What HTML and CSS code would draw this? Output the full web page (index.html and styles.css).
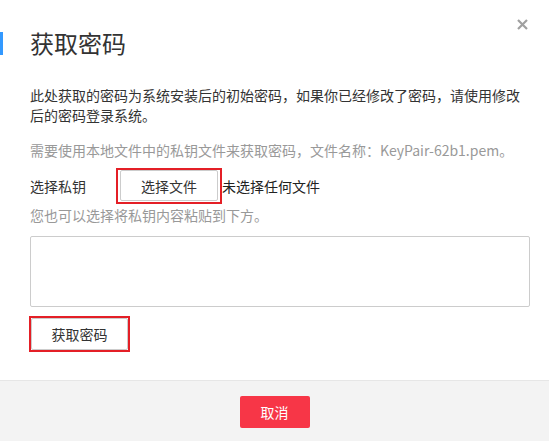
FILE: index.html
```html
<!DOCTYPE html>
<html lang="zh-CN">
<head>
<meta charset="utf-8">
<title>获取密码</title>
<link rel="stylesheet" href="styles.css">
</head>
<body>
<div class="dialog">
  <div class="header">
    <span class="bar"></span>
    <h1 class="title">获取密码</h1>
  </div>
  <span class="close" aria-label="关闭">
    <svg width="11" height="11" viewBox="0 0 11 11"><path d="M1 1L10 10M10 1L1 10" stroke="#a0a0a0" stroke-width="2.2" fill="none"/></svg>
  </span>
  <div class="content">
    <p class="desc">此处获取的密码为系统安装后的初始密码，如果你已经修改了密码，请使用修改后的密码登录系统。</p>
    <p class="hint">需要使用本地文件中的私钥文件来获取密码，文件名称：KeyPair-62b1.pem。</p>
    <div class="file-row">
      <span class="label">选择私钥</span>
      <span class="mark mark-file"><span class="btn btn-file">选择文件</span></span>
      <span class="no-file">未选择任何文件</span>
    </div>
    <p class="hint hint-paste">您也可以选择将私钥内容粘贴到下方。</p>
    <textarea class="key-input"></textarea>
    <span class="mark mark-get"><span class="btn btn-get">获取密码</span></span>
  </div>
  <div class="footer">
    <span class="btn-cancel">取消</span>
  </div>
</div>
</body>
</html>
```
FILE: styles.css
```css
* { box-sizing: border-box; }
html, body { margin: 0; padding: 0; background: #fff; }
body {
  font-family: "Noto Sans CJK SC", "Microsoft YaHei", sans-serif;
  font-size: 14px;
  color: #333;
}
.dialog { position: relative; min-height: 100vh; display: flex; flex-direction: column; }
.header {
  display: flex;
  align-items: center;
  height: 36px;
  margin-top: 25px;
}
.bar { width: 3px; height: 23px; background: #3399ff; }
.title {
  margin: 0 0 0 27px;
  font-size: 24px;
  font-weight: normal;
  line-height: 36px;
  color: #333;
}
.close {
  position: absolute;
  top: 19px;
  right: 21px;
  width: 11px;
  height: 11px;
  display: block;
}
.close svg { display: block; }
.content { padding: 0 20px 0 30px; display: flex; flex-direction: column; align-items: flex-start; }
.desc { margin: 24px 0 0; line-height: 20px; }
.hint { margin: 15px 0 0; line-height: 20px; color: #999; }
.file-row { display: flex; align-items: center; margin-top: 8px; height: 36px; }
.label { margin-right: 30px; }
.mark { display: inline-flex; border: 2px solid #e41f26; }
.mark-file { padding: 0 2px 1px 2px; }
.btn {
  display: inline-flex;
  align-items: center;
  justify-content: center;
  background: #fff;
  border: 1px solid #ccc;
  border-radius: 2px;
  color: #333;
}
.btn-file { width: 98px; height: 31px; }
.no-file { color: #222; }
.hint-paste { margin-top: 1px; }
.key-input {
  display: block;
  width: 500px;
  height: 71px;
  margin-top: 11px;
  border: 1px solid #ccc;
  border-radius: 2px;
  resize: none;
  font: inherit;
}
.mark-get { margin-top: 9px; margin-left: -1px; }
.btn-get { width: 97px; height: 32px; }
.footer {
  margin-top: 28px;
  flex: 1;
  background: #f3f3f3;
  border-top: 1px solid #e6e6e6;
  display: flex;
  justify-content: center;
  align-items: flex-start;
  padding-top: 15px;
}
.btn-cancel {
  display: inline-flex;
  align-items: center;
  justify-content: center;
  width: 70px;
  height: 32px;
  background: #f73647;
  color: #fff;
  border-radius: 2px;
}
```
